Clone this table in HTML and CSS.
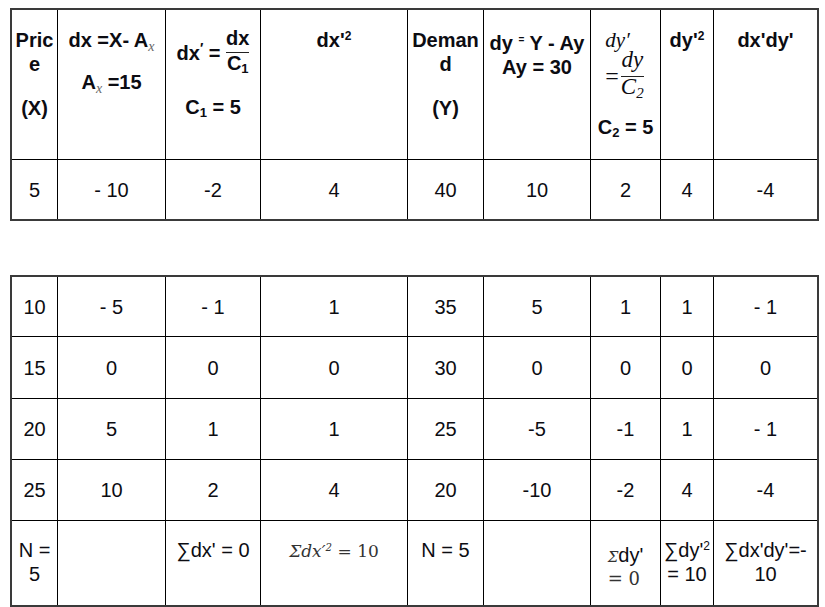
FILE: index.html
```html
<!DOCTYPE html>
<html>
<head>
<meta charset="utf-8">
<link rel="stylesheet" href="styles.css">
</head>
<body>
<div class="grid top">
  <div class="cell hd"><p>Price</p><p class="g20">(X)</p></div>
  <div class="cell hd"><p>dx =X- A<sub class="mx">x</sub></p><p class="g18">A<sub class="mx">x</sub> =15</p></div>
  <div class="cell hd"><p>dx<sup class="pr">′</sup> = <span class="frac sans"><span class="num">dx</span><span class="den">C<sub>1</sub></span></span></p><p class="g22">C<sub>1</sub> = 5</p></div>
  <div class="cell hd"><p>dx'<sup>2</sup></p></div>
  <div class="cell hd"><p>Demand</p><p class="g20">(Y)</p></div>
  <div class="cell hd"><p>dy <span class="sm">=</span> Y - Ay<br>Ay = 30</p></div>
  <div class="cell hd"><div class="mblock big"><span class="mi">dy′</span><br><span class="meq">=</span><span class="frac serif"><span class="num">dy</span><span class="den">C<sub>2</sub></span></span></div><p class="g18">C<sub>2</sub> = 5</p></div>
  <div class="cell hd"><p>dy'<sup>2</sup></p></div>
  <div class="cell hd"><p>dx'dy'</p></div>

  <div class="cell v">5</div>
  <div class="cell v">- 10</div>
  <div class="cell v">-2</div>
  <div class="cell v">4</div>
  <div class="cell v">40</div>
  <div class="cell v">10</div>
  <div class="cell v">2</div>
  <div class="cell v">4</div>
  <div class="cell v">-4</div>
</div>

<div class="grid bottom">
  <div class="cell v">10</div>
  <div class="cell v">- 5</div>
  <div class="cell v">- 1</div>
  <div class="cell v">1</div>
  <div class="cell v">35</div>
  <div class="cell v">5</div>
  <div class="cell v">1</div>
  <div class="cell v">1</div>
  <div class="cell v">- 1</div>

  <div class="cell v">15</div>
  <div class="cell v">0</div>
  <div class="cell v">0</div>
  <div class="cell v">0</div>
  <div class="cell v">30</div>
  <div class="cell v">0</div>
  <div class="cell v">0</div>
  <div class="cell v">0</div>
  <div class="cell v">0</div>

  <div class="cell v">20</div>
  <div class="cell v">5</div>
  <div class="cell v">1</div>
  <div class="cell v">1</div>
  <div class="cell v">25</div>
  <div class="cell v">-5</div>
  <div class="cell v">-1</div>
  <div class="cell v">1</div>
  <div class="cell v">- 1</div>

  <div class="cell v">25</div>
  <div class="cell v">10</div>
  <div class="cell v">2</div>
  <div class="cell v">4</div>
  <div class="cell v">20</div>
  <div class="cell v">-10</div>
  <div class="cell v">-2</div>
  <div class="cell v">4</div>
  <div class="cell v">-4</div>

  <div class="cell ft">N = 5</div>
  <div class="cell ft"></div>
  <div class="cell ft">∑dx' = 0</div>
  <div class="cell ft"><span class="mi mth">Σdx′<sup>2</sup></span> <span class="mth">= 10</span></div>
  <div class="cell ft">N = 5</div>
  <div class="cell ft"></div>
  <div class="cell ft ft-low"><div class="mblock"><span class="mi mth small">Σ</span>dy'<br><span class="mth eq0">= 0</span></div></div>
  <div class="cell ft">∑dy'<sup>2</sup> = 10</div>
  <div class="cell ft">∑dx'dy'=-<br>10</div>
</div>
</body>
</html>
```

FILE: styles.css
```css
* {
  box-sizing: border-box;
}

body {
  margin: 8px 0 0 10px;
  background: #ffffff;
  color: #0c0c12;
  font-family: "Liberation Sans", Arial, sans-serif;
  font-size: 20px;
  line-height: 24px;
}

p {
  margin: 0;
}

.grid {
  display: grid;
  grid-template-columns: 46px 108px 95px 147px 76px 107px 70px 53px 103px;
  width: max-content;
  border: 2px solid #3a3a3a;
}

.top {
  grid-template-rows: 150px 59px;
}

.bottom {
  margin-top: 54px;
  grid-template-rows: 60px 62px 61px 61px 84px;
}

.cell {
  border-right: 1px solid #000;
  border-bottom: 1px solid #000;
  padding: 0 1px;
  text-align: center;
  overflow-wrap: anywhere;
}

.cell:nth-child(9n) {
  border-right: 0;
}

.top .cell:nth-child(n+10),
.bottom .cell:nth-child(n+37) {
  border-bottom: 0;
}

.hd {
  font-weight: bold;
  padding-top: 18px;
}

.v {
  display: flex;
  align-items: center;
  justify-content: center;
}

.ft {
  padding-top: 17px;
}

.ft-low {
  padding-top: 24px;
  line-height: 21px;
}

.g18 { margin-top: 18px; }
.g20 { margin-top: 20px; }
.g22 { margin-top: 22px; }

sub {
  font-size: 0.65em;
  line-height: 0;
  vertical-align: -0.25em;
}

sup {
  font-size: 0.6em;
  line-height: 0;
  vertical-align: 0.6em;
}

.mx {
  font-family: "Liberation Serif", "Times New Roman", serif;
  font-style: italic;
  font-weight: normal;
  font-size: 14px;
  color: #666;
}

.pr {
  font-size: 0.7em;
  vertical-align: 0.5em;
}

.sm {
  font-size: 0.5em;
  vertical-align: 0.7em;
}

.frac {
  display: inline-flex;
  flex-direction: column;
  text-align: center;
}

.frac .num {
  line-height: 20px;
}

.frac .den {
  line-height: 20px;
  border-top: 1px solid #222;
}

.frac.sans {
  vertical-align: 15px;
}

.frac.sans .num {
  padding-bottom: 4px;
}

.mblock {
  display: inline-block;
  text-align: left;
}

.mblock.big {
  margin-top: 2px;
  font-size: 21px;
  line-height: 20px;
}

.frac.serif {
  font-family: "Liberation Serif", "Times New Roman", serif;
  font-style: italic;
  font-weight: normal;
  font-size: 23px;
  vertical-align: 17px;
  padding: 0 2px;
}

.frac.serif .num {
  padding-bottom: 6px;
}

.mi {
  font-family: "Liberation Serif", "Times New Roman", serif;
  font-style: italic;
  font-weight: normal;
}

.meq {
  font-family: "Liberation Serif", "Times New Roman", serif;
  font-weight: normal;
  font-size: 24px;
}

.mth {
  font-family: "DejaVu Serif", "Liberation Serif", serif;
  font-size: 17px;
  color: #333;
}

.mth.eq0 {
  font-size: 18px;
}

.small {
  font-size: 15px;
}
```
